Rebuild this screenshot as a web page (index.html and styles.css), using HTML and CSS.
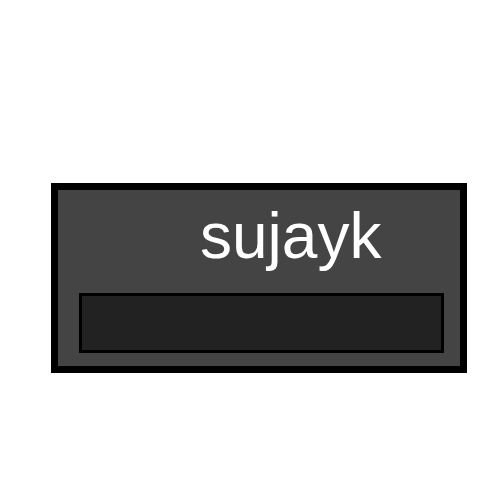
FILE: index.html
```html
<!DOCTYPE html>
<html>
<head>
<meta charset="utf-8">
<link rel="stylesheet" href="styles.css">
</head>
<body>
<div class="card">
  <div class="name">sujayk</div>
  <div class="field"></div>
</div>
</body>
</html>
```

FILE: styles.css
```css
html, body {
  margin: 0;
  padding: 0;
  background: #fff;
}
.card {
  box-sizing: border-box;
  margin: 183px 0 0 51px;
  width: 416px;
  height: 190px;
  border: 7px solid #000;
  background: #444444;
  padding: 9px 16px 13px 21px;
  display: flex;
  flex-direction: column;
}
.name {
  font-family: "Liberation Sans", Arial, sans-serif;
  font-size: 64px;
  line-height: 74px;
  color: #fff;
  padding-left: 121px;
}
.field {
  box-sizing: border-box;
  margin-top: 20px;
  height: 60px;
  border: 3px solid #000;
  background: #222222;
}
```
